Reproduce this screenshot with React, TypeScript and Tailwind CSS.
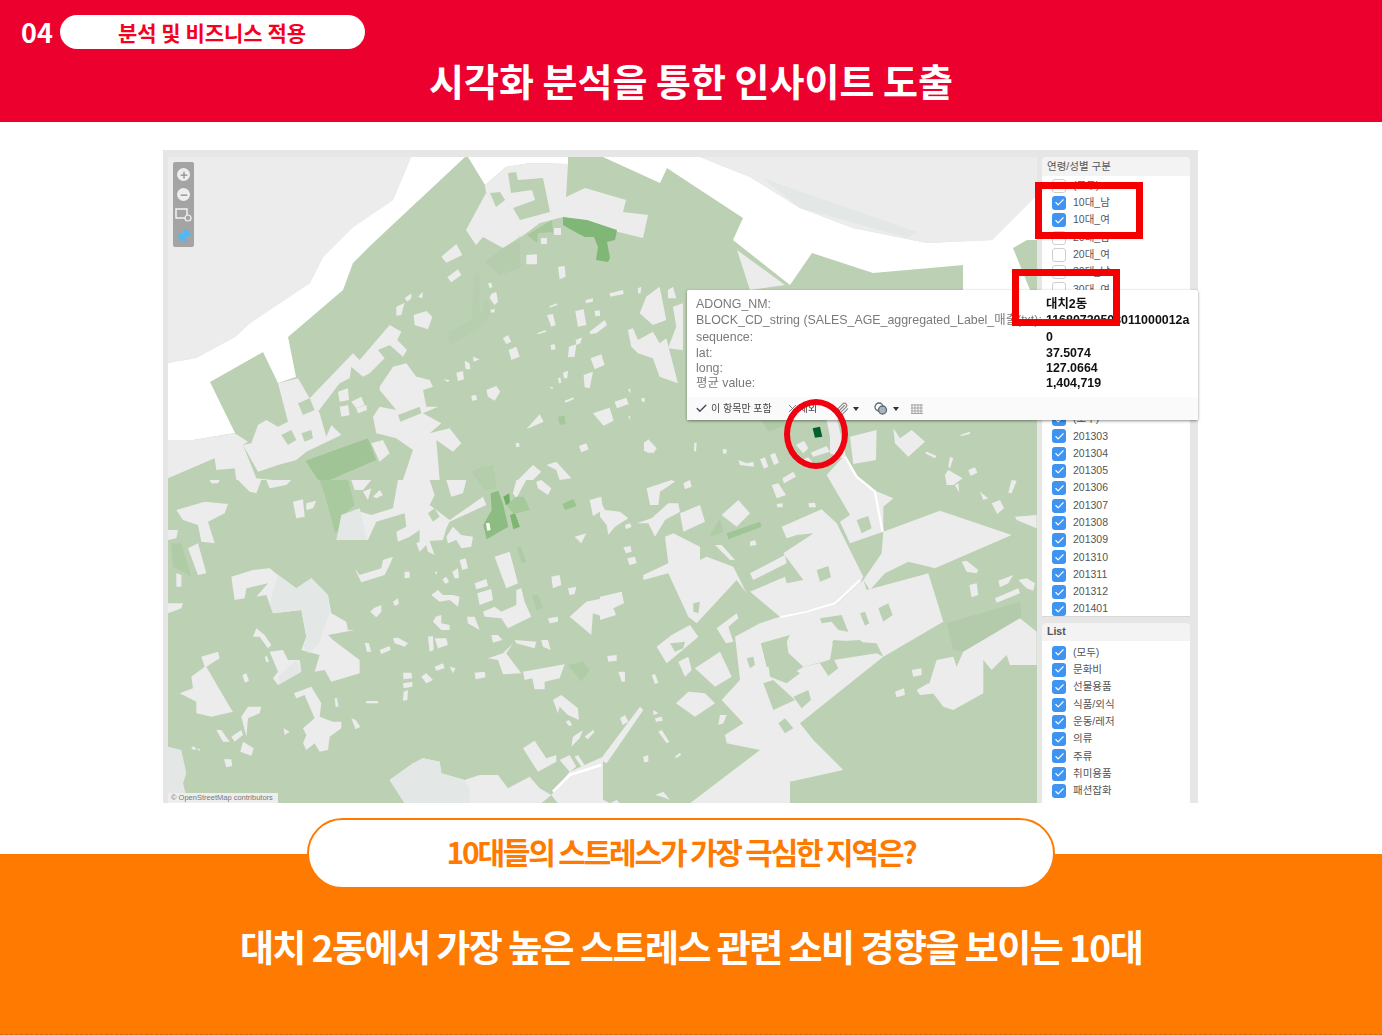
import React from 'react';
import { Check, X, Paperclip, Plus, Minus, Pin } from 'lucide-react';

const GRAY = '#ececec';
const ISLAND = '#e3e8e6';

// polygons are noted in the 3x crop coordinates of each map quadrant
const topBlocks = [
  '835,320 880,282 898,315 850,338', '853,382 885,358 895,375 865,397', '700,470 725,458 715,495 700,497',
  '725,445 745,430 745,445 733,455', '765,440 780,425 778,445', '752,495 790,483 808,500 795,538 755,525',
  '1090,315 1122,313 1122,343 1090,343', '1185,350 1205,348 1208,380 1190,388', '975,400 985,398 988,412 980,414',
  '985,432 1000,425 1005,455 995,465 980,445', '980,480 995,477 995,487 982,488', '1340,430 1380,420 1382,432 1342,440',
  '1425,415 1435,410 1433,430 1425,430', '1160,468 1183,460 1183,465 1160,473', '1268,450 1290,445 1290,455 1268,460',
  '1152,495 1170,492 1178,525 1165,530', '1237,483 1262,478 1270,525 1245,530', '1295,483 1310,481 1312,497 1297,499',
  '1280,545 1325,510 1332,525 1300,550 1282,552', '1122,550 1148,540 1150,545 1125,553', '1020,565 1035,555 1045,575 1030,582',
  '1037,600 1060,590 1070,620 1045,630', '1163,585 1175,582 1178,598 1165,600', '1218,590 1240,583 1235,620 1215,622',
  '1238,570 1258,562 1252,580 1240,585', '1283,625 1315,613 1325,645 1295,658', '1262,675 1290,665 1280,715 1265,712',
  '905,632 920,640 922,658 908,658', '930,620 950,628 932,635', '880,668 900,663 903,688 885,693', '842,688 860,690 855,697',
  '970,720 1000,708 1012,725 995,752 975,740', '925,737 940,735 942,750 927,752', '1160,712 1170,710 1168,718',
  '1185,685 1192,682 1195,698 1188,700', '1200,668 1215,662 1213,685 1203,685', '1205,752 1232,742 1232,748 1208,758',
  '1355,755 1390,743 1397,762 1362,775', '1395,720 1402,715 1403,730', '1435,745 1445,743 1446,755 1437,755',
  '1290,790 1340,773 1352,812 1322,827', '1395,800 1400,797 1403,810', '1090,838 1130,793 1142,815',
  '1248,888 1270,880 1277,898 1255,907', '1058,880 1068,878 1070,890 1060,892', '1443,875 1480,895 1460,910 1443,902',
  '1150,945 1180,935 1225,985 1190,990 1180,960', '1065,990 1110,945 1135,965 1110,990',
  '1450,440 1490,410 1500,460 1510,510 1470,525 1430,490', '1515,420 1530,410 1540,445 1515,445',
  '1395,540 1410,535 1425,570 1470,545 1490,580 1510,565 1545,700 1490,680 1470,625 1425,610 1405,590',
  '1530,470 1560,460 1560,600 1515,595 1540,530',
  '440,745 570,610 590,630 680,525 715,545 703,570 732,600 720,620 680,585 645,600 665,625 620,670 600,680 565,650 560,685 530,700 465,785',
  '345,700 405,685 440,745 470,790 490,860 505,825 535,855 430,905 400,930 345,945 285,965 240,885 265,880 285,825 310,810 345,830 375,815',
  '15,870 90,870 215,850 255,875 240,885 280,985 330,990 220,990 215,955 160,960 155,925 15,985',
  '650,710 690,650 730,640 760,680 800,690 810,710 780,720 790,770 825,770 780,790 835,820 800,850 860,835 895,880 870,905 820,870 830,990 720,990 750,900 700,865 640,850 630,800 650,770 700,780 650,720',
  '625,880 660,870 680,910 650,935',
  '525,725 555,715 558,750 530,755', '565,755 595,740 605,765 580,775', '530,770 555,765 560,795 535,800', '580,775 610,765 612,780 585,790',
];
const topGreenHoles = [
  '405,760 440,745 455,780 420,795', '355,855 385,840 400,870 375,885', '415,850 445,840 450,865 425,875', '705,795 770,770 775,790 712,815',
  '540,975 620,945 580,990 545,990',
];

const lowerLeftBlocks = [
  '140,0 170,0 165,10 145,10', '225,0 295,0 280,40 260,35', '310,0 385,0 370,15 320,25',
  '565,0 625,0 600,30 575,30', '600,35 625,25 615,60', '630,50 650,30 660,45 640,55',
  '705,0 800,0 815,45 800,75 860,120 960,50 970,75 860,125 850,145 840,180 770,185 770,150 740,170 705,185 700,155 730,140 725,100 640,125 615,180 545,155 530,130 550,105 575,90 625,105 690,85',
  '850,0 910,0 900,40 865,50', '850,170 870,140 895,165 930,170 925,200 895,205 880,180 855,190', '760,190 795,170 815,225 795,215 790,195 770,215',
  '1060,0 1090,0 1060,55 1050,40', '1120,5 1135,0 1165,25 1155,45 1125,25',
  '40,90 125,65 195,72 185,100 135,125 155,190 115,185 105,135 60,120', '15,150 45,150 40,175 15,180',
  '75,205 105,190 130,280 105,285', '40,280 55,285 55,320 40,320', '15,370 60,370 55,385 15,400',
  '390,65 420,58 425,110 400,115', '430,70 460,62 450,85 430,90',
  '205,290 270,270 320,265 345,285 400,325 445,295 495,345 505,400 550,425 555,450 575,450 495,465 510,480 590,540 590,580 505,605 485,570 455,575 470,525 415,510 430,470 415,390 330,400 310,345 280,350 315,310 250,325 245,355 215,360',
  '575,265 590,285 655,265 660,240 690,230 680,255 665,285 595,307', '725,275 740,275 740,293 725,295', '815,275 822,275 822,285',
  '838,298 850,290 858,305 848,312', '868,275 885,265 888,295 875,295', '890,240 908,235 915,265 898,270',
  '805,345 825,330 840,345 870,345 890,350 885,380 860,360 830,365', '632,385 655,375 655,395 640,412 622,395', '690,365 705,355 708,372 695,378',
  '995,230 1040,215 1065,310 1030,325', '935,310 970,297 975,318 940,328', '943,340 985,327 990,360 950,375',
  '960,395 995,380 1015,395 1060,375 1060,330 1075,325 1085,365 1105,410 1035,445 1015,415 965,410',
  '1165,290 1190,285 1195,315 1170,325', '1215,325 1240,320 1235,342 1220,345', '1235,170 1270,160 1255,190',
  '1280,60 1315,50 1320,90 1290,108', '1220,410 1270,365 1320,355 1320,410 1290,400 1285,465 1250,435', '1155,415 1185,410 1185,425 1160,430',
  '270,470 280,445 305,465 325,495 315,505 290,470', '305,530 312,528 318,545 310,547', '320,515 360,510 375,540 410,540 415,575 345,615 330,595 345,575',
  '238,585 250,580 258,602 246,608', '115,530 165,515 170,535 130,560 200,680 210,695 145,710 100,700 100,665 50,640 90,625 85,590 125,560',
  '255,680 295,680 290,700 255,715 250,770 240,730 235,710', '160,750 175,750 200,785 180,785', '205,770 235,750 240,765 215,785',
  '240,785 272,805 265,827 232,815', '183,838 205,838 208,858 190,862', '362,745 380,755 365,765',
  '393,640 445,620 475,670 470,710 510,725 535,725 535,745 500,770 495,810 470,815 455,790 430,810 420,790 430,765 420,745 455,715 425,645 400,655',
  '515,655 522,655 527,680 518,680', '565,715 578,720 592,740 578,748', '610,663 645,663 645,670 610,670', '720,578 745,578 748,595 722,598',
  '720,610 748,605 748,620 722,625', '722,635 735,630 733,660 720,662', '775,590 790,580 810,600 790,610', '815,560 840,550 845,565 820,572',
  '860,560 878,565 870,580', '818,410 835,405 835,430 860,435 860,450 835,450 810,425', '815,475 850,475 855,495 825,505', '795,470 810,468 812,510 800,515',
  '690,475 705,473 735,490 725,500 695,490', '650,510 680,498 683,510 655,522', '605,488 618,490 625,515 612,515', '912,410 935,410 950,450 915,430',
  '985,465 1005,465 1018,480 990,488', '975,535 1020,520 1050,490 1030,520 1075,580 1020,583 1005,540', '935,578 965,575 968,592 938,598',
  '1055,480 1120,485 1115,505 1060,490', '1135,480 1155,480 1163,510 1140,500', '1080,575 1205,553 1190,595 1145,605 1145,628 1115,628 1108,595 1085,600',
  '1170,660 1195,645 1245,685 1248,720 1215,705 1190,680 1185,700', '1208,725 1218,720 1228,735 1218,738', '1225,800 1230,770 1260,750 1250,775',
  '1265,770 1290,750 1295,755 1275,778', '1080,805 1115,782 1150,835 1180,825 1180,845 1125,875', '1190,840 1220,825 1240,860 1220,875', '1235,830 1245,825 1265,855 1255,860',
  '680,900 750,850 780,835 830,845 835,880 905,900 950,885 1005,885 1035,925 1100,890 1130,925 1165,945 1220,875 1320,830 1320,970 725,970',
  '85,800 95,800 100,810 88,808', '100,805 112,808 110,813',
];
const lowerLeftIslands = [
  '345,285 400,325 445,295 495,345 500,400 480,450 470,490 440,520 420,505 430,470 415,390 330,400 320,370',
  '345,590 400,540 415,575 350,612',
  '680,900 750,850 780,835 830,845 835,880 905,900 920,925 920,970 725,970',
  '15,800 55,810 70,880 60,910 75,970 15,970',
];

const lowerRightBlocks = [
  '132,70 145,58 170,85 160,100 135,92', '283,68 290,68 288,95 282,92', '368,88 380,88 380,100 370,102', '415,120 440,130 460,125 462,140 420,135',
  '480,118 495,112 505,140 492,146', '510,105 525,98 537,128 522,135', '547,175 580,155 588,170 552,190', '515,195 535,190 558,225 530,235',
  '530,252 548,250 548,262 532,262', '625,250 645,248 648,262 628,262', '588,75 612,62 625,85 610,100', '632,98 680,78 690,95 640,110', '610,118 625,112 640,130 625,132',
  '680,0 712,0 740,120 690,100 690,50', '750,50 830,30 828,120 760,132',
  '680,165 730,110 770,170 820,210 880,235 850,260 850,335 750,370 720,305 750,285',
  '880,25 900,55 935,30 975,65 925,110 885,70', '1080,45 1110,35 1110,42 1085,48', '975,100 980,95 1010,108 1005,115', '1050,110 1060,115 1050,145 1045,140',
  '1105,150 1125,142 1132,158 1112,168', '1035,165 1045,150 1088,175 1060,195 1040,195', '1065,195 1075,190 1078,218', '1235,180 1250,182 1235,220 1225,218',
  '1140,215 1165,235 1150,240', '1175,250 1200,240 1212,265 1192,282', '1245,290 1310,285 1310,325 1250,300',
  '850,335 1020,272 1235,345 1005,445 925,425 855,460 810,510 790,480 845,400',
  '545,320 665,268 710,310 790,470 780,490 715,550 540,590 450,515 555,470 560,490 610,480 550,400 625,350 640,340 590,345 560,355',
  '800,510 985,460 1030,605 850,710 830,670 700,660 690,720 610,740 550,685 570,645 410,690 405,650 480,610 540,590 715,550 790,480',
  '610,740 700,720 830,700 850,710 600,910 640,960 730,1050 570,1085 570,1150 270,1150 480,990 380,970 375,945 430,910 365,840 420,780 410,690 480,660 500,740 580,760',
  '1090,695 1260,595 1310,635 1310,735 1230,735 1220,705 1175,750 1150,720 1150,820 1060,870 1030,860 985,800 1010,720 1060,710 1070,740',
  '885,815 912,805 915,825 890,832', '935,750 965,745 965,765 940,770', '950,810 985,790 1010,820 960,825',
  '1085,425 1100,422 1135,450 1130,460 1100,455', '1108,495 1130,490 1135,525 1115,532', '1195,482 1240,465 1225,490 1200,502',
  '1185,535 1255,505 1260,520 1190,548', '1255,480 1280,475 1305,490 1300,512 1280,505',
  '140,205 215,180 225,185 180,215 175,255 150,255', '250,190 270,180 275,200 255,207', '0,240 15,270 60,275 85,295 45,320 25,345 20,315 0,290',
  '75,315 90,310 95,320 78,328', '70,382 92,378 95,395 78,400', '82,415 105,410 110,430 88,435', '110,310 155,295 205,250 235,250 240,275 195,300 165,350 145,310',
  '240,280 300,255 315,305 250,335', '365,285 415,240 450,280 410,320',
  '195,350 220,340 300,380 300,420 320,410 400,440 440,520 410,480 290,610 265,590 205,460 130,480 130,465 205,430',
  '345,375 365,375 405,420 390,420', '450,365 465,360 470,375 450,378', '450,460 555,405 560,430 460,480', '0,530 65,515 72,550 40,565 48,585 0,600',
  '170,680 215,645 270,615 295,650 200,730', '350,625 410,580 415,595 385,620 400,665 378,670', '235,725 265,710 275,750 255,770', '285,745 360,695 395,770 345,800',
  '22,708 50,705 50,722 25,725', '55,755 75,755 75,785 65,785', '155,765 165,762 175,788 165,792', '228,850 265,815 315,820 345,850 285,890',
  '130,1010 145,1005 145,1025 132,1027', '175,935 185,930 208,965 200,970', '225,1010 240,998 243,1005 228,1015', '0,1020 120,860 130,870 20,1030',
  '60,895 75,885 85,905 68,915', '160,870 175,880 160,885', '165,895 185,890 188,902 168,905', '360,885 380,885 370,910 355,915',
  '165,1125 190,1115 210,1140 190,1132', '0,1135 30,1150 50,1140 60,1150 0,1150',
];
const lowerRightHoles = [
  '770,300 805,288 815,325 785,340', '650,450 685,438 693,472 660,485', '660,595 725,585 745,635 715,630 695,605 665,610', '780,580 795,575 808,610 795,617',
  '835,565 865,550 878,585 850,605', '535,910 555,895 580,925 555,940', '580,830 625,810 633,840 605,865', '280,550 300,545 295,580 280,575',
  '210,670 255,665 250,685 225,695', '660,730 700,715 715,745 685,768', '500,690 560,660 570,740 600,760 560,790 510,770',
  '695,665 780,660 810,690 720,705', '440,715 460,710 465,735 450,745', '490,790 520,780 585,840 520,870',
];

function Polys({ items, fill }: { items: string[]; fill: string }) {
  return (
    <>
      {items.map((points, i) => (
        <polygon key={i} points={points} fill={fill} />
      ))}
    </>
  );
}

function MapDrawing() {
  return (
    <svg viewBox="168 157 869 646" className="block w-full h-full" preserveAspectRatio="none">
      <rect x="168" y="157" width="869" height="646" fill="#bcd1b4" />

      {/* river and far bank */}
      <polygon points="168,157 411,157 393,200 353,227 323,257 310,283 250,323 235,337 196,358 168,363" fill={GRAY} />
      <polygon points="411,157 465,157 371,245 353,263 343,290 288,337 296,377 278,383 263,352 210,382 235,433 193,440 168,440 168,363 196,358 235,337 250,323 310,283 323,257 353,227 393,200" fill="#ffffff" />
      <polygon points="468,157 568,157 568,164 530,163 506,167 485,185" fill="#ffffff" />
      <polygon points="700,157 1037,157 1037,195 992,240 927,243 853,228 800,208 750,177" fill={GRAY} />
      <polygon points="603,157 700,157 750,177 800,208 853,228 927,243 992,240 1037,195 1037,290 963,290 963,265 873,273 812,253 790,285 733,240 743,218 667,168 660,183" fill="#ffffff" />
      <polygon points="762,178 917,232 908,238 800,208" fill={ISLAND} />
      <polygon points="1013,248 1027,240 1037,240 1037,290 1030,290" fill="#bcd1b4" />
      <polygon points="737,250 785,285 750,290" fill={GRAY} />

      {/* top bend */}
      <polygon points="485,185 506,167 530,163 568,164 566,197 585,188 626,200 623,212 648,215 643,238 610,230 563,217 540,223 521,237 516,233 486,193" fill={GRAY} />
      <polygon points="486,193 520,237 503,248 483,237 476,245 466,230" fill={GRAY} />
      <polygon points="508,173 516,172 518,180 543,178 550,212 520,220 513,208 535,200 532,190 511,193" fill="#bcd1b4" />
      <polygon points="490,193 500,192 505,200 496,207" fill="#bcd1b4" />
      <polygon points="527,235 552,220 553,232 538,233 537,243" fill="#a5c79b" />
      <polygon points="563,217 587,220 617,230 615,240 607,242 610,258 608,262 596,260 598,247 594,237 585,237 577,233 563,225" fill="#80b676" />
      <polygon points="503,248 520,240 520,268 500,275 485,262" fill="#b5cdac" />
      <rect x="541" y="238" width="6" height="6" fill={GRAY} />
      <rect x="554" y="228" width="7" height="7" fill={GRAY} />

      <g transform="translate(163 150) scale(0.3333)">
        <Polys items={topBlocks} fill={GRAY} />
        <Polys items={topGreenHoles} fill="#bcd1b4" />
        <polygon points="428,932 615,865 640,930 500,990 465,990" fill="#a0c496" />
        <polygon points="1185,800 1205,798 1208,822 1190,825" fill="#a5c79b" />
        <polygon points="935,370 950,370 950,500 970,440 985,490 945,540 860,585 855,545 925,510" fill="#b7cfaf" />
      </g>

      {/* lower left */}
      <g transform="translate(163 480) scale(0.3333)">
        <polygon points="470,0 555,0 575,75 540,105 545,155 515,155 490,60" fill="#a9c99f" />
        <Polys items={lowerLeftBlocks} fill={GRAY} />
        <polygon points="795,100 815,85 830,110 810,125" fill="#bcd1b4" />
        <Polys items={lowerLeftIslands} fill={ISLAND} />
        <polygon points="535,105 590,85 612,180 520,180" fill={ISLAND} />
        <polygon points="1135,970 1165,945 1185,970" fill="#bcd1b4" />
        <polygon points="1215,555 1260,545 1280,570 1255,605" fill="#b0cca6" />
        <polygon points="25,190 55,190 85,290 30,260" fill="#b0cca6" />
        <polyline points="1170,935 1220,885 1315,855" fill="none" stroke="#ffffff" strokeWidth="8" />
      </g>

      {/* hot spot around the centre */}
      <g transform="translate(300 430) scale(0.3333)">
        <polygon points="515,125 545,110 580,105 590,175 555,180" fill="#b4cdaa" />
        <polygon points="550,285 575,240 572,190 595,182 610,225 625,290 560,328" fill="#8cbc82" />
        <polygon points="630,255 645,250 660,290 640,298" fill="#7db573" />
        <polygon points="610,200 628,190 630,222 618,225" fill="#6fae65" />
        <polygon points="620,225 650,200 672,200 690,240 640,252" fill="#a5c99b" />
        <polygon points="558,280 568,278 572,300 562,302" fill="#ffffff" />
        <polygon points="787,222 820,207 830,228 795,240" fill="#9ac490" />
        <polygon points="650,352 662,350 680,395 665,400" fill="#aecba6" />
        <polygon points="695,495 715,495 730,535 710,540" fill="#b0cca8" />
      </g>

      {/* lower right */}
      <g transform="translate(600 420) scale(0.3333)">
        <polygon points="1040,610 1260,545 1265,595 1090,695 1060,690" fill="#b3cbaa" />
        <polygon points="485,0 550,0 560,15 505,35" fill="#afcba6" />
        <polygon points="330,345 360,295 370,335 335,352" fill="#b0cca6" />
        <polygon points="380,340 480,305 485,320 385,358" fill="#a0c596" />
        <Polys items={lowerRightBlocks} fill={GRAY} />
        <Polys items={lowerRightHoles} fill="#bcd1b4" />
        <polygon points="638,25 660,20 667,50 645,53" fill="#00602e" />
        <polyline points="540,592 620,575 705,550 780,480" fill="none" stroke="#ffffff" strokeWidth="6" />
        <polyline points="735,110 770,170 825,215 835,270 848,335" fill="none" stroke="#ffffff" strokeWidth="7" />
      </g>
    </svg>
  );
}

function Box({ checked = true }: { checked?: boolean }) {
  if (!checked) {
    return <span className="block w-[14px] h-[14px] shrink-0 rounded-[3px] border border-[#cfcfcf] bg-white" />;
  }
  return (
    <span className="flex items-center justify-center w-[14px] h-[14px] shrink-0 rounded-[3px] bg-[#3f94f2]">
      <Check size={11} strokeWidth={2.5} className="text-white" />
    </span>
  );
}

function Row({ label, checked = true }: { label: string; checked?: boolean }) {
  return (
    <div className="flex items-center gap-[7px] h-[17.3px] pl-[10px] text-[10.5px] text-[#555] whitespace-nowrap">
      <Box checked={checked} />
      <span>{label}</span>
    </div>
  );
}

const ageRows = ['(모두)', '10대_남', '10대_여', '20대_남', '20대_여', '30대_남', '30대_여'];
const monthRows = ['(모두)', '201303', '201304', '201305', '201306', '201307', '201308', '201309', '201310', '201311', '201312', '201401'];
const listRows = ['(모두)', '문화비', '선물용품', '식품/외식', '운동/레저', '의류', '주류', '취미용품', '패션잡화'];

function Sidebar() {
  return (
    <div className="w-[148px] ml-[5px] flex flex-col">
      <div className="h-[190px] bg-white rounded-t-[5px] overflow-hidden">
        <div className="h-[19px] bg-[#f3f3f3] px-[5px] flex items-center text-[10.5px] text-[#555]">연령/성별 구분</div>
        <div className="pt-[1px]">
          {ageRows.map((label, i) => (
            <Row key={label} label={label} checked={i === 1 || i === 2} />
          ))}
        </div>
      </div>
      <div className="h-[269px] mt-[1px] bg-white border-b border-[#d8d8d8] overflow-hidden flex flex-col justify-end">
        <div className="-mb-[2px]">
          {monthRows.map(label => (
            <Row key={label} label={label} />
          ))}
        </div>
      </div>
      <div className="flex-1 mt-[6px] bg-white rounded-t-[5px] overflow-hidden">
        <div className="h-[18px] bg-[#f3f3f3] px-[5px] flex items-center text-[10.5px] font-bold text-[#555]">List</div>
        <div className="pt-[3px]">
          {listRows.map(label => (
            <Row key={label} label={label} />
          ))}
        </div>
      </div>
    </div>
  );
}

function MapControls() {
  return (
    <div className="absolute left-[5px] top-[5px] w-[21px] h-[85px] rounded-[2px] bg-[#a4a4a4] flex flex-col items-center pt-[6px] gap-[7px]">
      <span className="flex items-center justify-center w-[13px] h-[13px] rounded-full bg-[#eeeeee]">
        <Plus size={10} strokeWidth={3} className="text-[#8a8a8a]" />
      </span>
      <span className="flex items-center justify-center w-[13px] h-[13px] rounded-full bg-[#eeeeee]">
        <Minus size={10} strokeWidth={3} className="text-[#8a8a8a]" />
      </span>
      <svg width="17" height="14" viewBox="0 0 17 14">
        <rect x="1" y="1" width="11" height="9" fill="none" stroke="#f2f2f2" strokeWidth="1.5" />
        <circle cx="13" cy="10" r="3" fill="#a4a4a4" stroke="#f2f2f2" strokeWidth="1.2" />
      </svg>
      <Pin size={15} strokeWidth={2} className="rotate-45 text-[#4fb9f5] fill-[#4fb9f5]" />
    </div>
  );
}

function Tooltip() {
  const labels = [
    ['ADONG_NM:', '대치2동', 'h-[16px]'],
    ['BLOCK_CD_string (SALES_AGE_aggregated_Label_매출(txt):', '11680720503011000012a', 'h-[17px]'],
    ['sequence:', '0', 'h-[16px]'],
    ['lat:', '37.5074', 'h-[15px]'],
    ['long:', '127.0664', 'h-[15px]'],
    ['평균 value:', '1,404,719', 'h-[16px]'],
  ];
  return (
    <div className="absolute left-[524px] top-[140px] w-[511px] h-[130px] bg-white rounded-[2px] shadow-[0_1px_3px_rgba(0,0,0,0.45)] flex flex-col">
      <div className="flex-1 pt-[7px] pl-[9px] text-[12.4px] leading-[15px]">
        {labels.map(([name, value, height]) => (
          <div key={name} className={`flex ${height}`}>
            <span className="w-[350px] shrink-0 text-[#7a7a7a] whitespace-nowrap">{name}</span>
            <span className="font-bold text-[#111] whitespace-nowrap">{value}</span>
          </div>
        ))}
      </div>
      <div className="h-[23px] bg-[#fafafa] flex items-center pl-[8px] text-[10px] text-[#444]">
        <Check size={13} strokeWidth={2.5} className="text-[#3b4a5a]" />
        <span className="ml-[3px]">이 항목만 포함</span>
        <X size={13} strokeWidth={1.5} className="ml-[14px] text-[#5d6b78]" />
        <span>제외</span>
        <Paperclip size={14} className="ml-[18px] text-[#8a8a8a]" />
        <span className="ml-[4px] w-0 h-0 border-x-[3px] border-x-transparent border-t-[4px] border-t-[#333]" />
        <svg width="14" height="13" viewBox="0 0 14 13" className="ml-[15px]">
          <circle cx="5" cy="5" r="4" fill="none" stroke="#5d6b78" strokeWidth="1.3" />
          <circle cx="8.5" cy="8" r="4" fill="#aab2ba" stroke="#5d6b78" strokeWidth="1.3" />
        </svg>
        <span className="ml-[5px] w-0 h-0 border-x-[3px] border-x-transparent border-t-[4px] border-t-[#333]" />
        <svg width="12" height="10" viewBox="0 0 12 10" className="ml-[12px]">
          <path d="M0 1h12M0 4h12M0 7h12M0 9.5h12M1 0v10M4 0v10M7 0v10M10 0v10" stroke="#a5a5a5" strokeWidth="1" />
        </svg>
      </div>
    </div>
  );
}

export default function App() {
  return (
    <div className="w-[1382px] h-[1035px] overflow-hidden bg-white flex flex-col font-['Noto_Sans_CJK_KR',sans-serif]">
      <header className="h-[122px] bg-[#ec002d] shrink-0 pt-[15px]">
        <div className="flex items-center h-[34px] pl-[21px]">
          <span className="w-[39px] -mt-[2px] text-[27px] leading-none font-bold text-white">04</span>
          <div className="w-[305px] h-[34px] rounded-full bg-white flex items-center justify-center text-[21px] leading-none font-bold text-[#f5001e]">
            <span className="-ml-[1px]">분석 및 비즈니스 적용</span>
          </div>
        </div>
        <h1 className="mt-[9px] text-center text-[38px] leading-[44px] font-bold text-white whitespace-nowrap">시각화 분석을 통한 인사이트 도출</h1>
      </header>

      <main className="h-[732px] shrink-0 pt-[28px] pl-[163px]">
        <div className="relative w-[1035px] h-[653px] bg-[#e6e6e6] pt-[7px] pl-[5px] flex font-['Liberation_Sans','Noto_Sans_CJK_KR',sans-serif] blur-[0.4px]">
          <div className="relative w-[869px] h-[646px] overflow-hidden">
            <MapDrawing />
            <MapControls />
            <div className="absolute left-0 bottom-0 w-[110px] h-[10px] bg-[#eeeeee] pl-[3px] text-[7.5px] leading-[10px] text-[#777] whitespace-nowrap">© OpenStreetMap contributors</div>
          </div>
          <Sidebar />
          <Tooltip />
          <div className="absolute left-[872px] top-[32px] w-[108px] h-[57px] border-[7px] border-[#f50000]" />
          <div className="absolute left-[849px] top-[119px] w-[108px] h-[57px] border-[7px] border-[#f50000]" />
          <div className="absolute left-[621px] top-[249px] w-[64px] h-[70px] rounded-[50%] border-[6px] border-[#f00010]" />
        </div>
      </main>

      <section className="flex-1 bg-[#ff7a00] border-b border-dashed border-[#c96a1a] flex flex-col">
        <div className="relative -mt-[36px] ml-[307px] w-[748px] h-[71px] shrink-0 rounded-full bg-white border-2 border-[#ff7a00] flex items-center justify-center">
          <span className="-mt-[4px] text-[30px] font-bold text-[#ff7a00] tracking-[-2.2px] whitespace-nowrap">10대들의 스트레스가 가장 극심한 지역은?</span>
        </div>
        <p className="mt-[30px] text-center text-[37px] leading-[54px] font-bold text-white tracking-[-1.55px] whitespace-nowrap">대치 2동에서 가장 높은 스트레스 관련 소비 경향을 보이는 10대</p>
      </section>
    </div>
  );
}
